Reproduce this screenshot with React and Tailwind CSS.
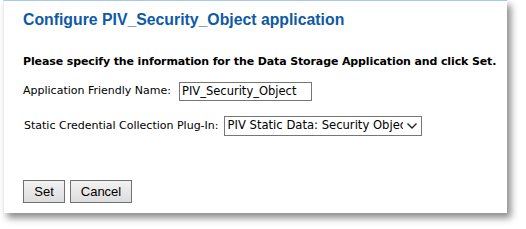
export default function App() {
  return (
    <div className="w-[526px] h-[229px] bg-white overflow-hidden">
      <div className="ml-[3px] w-[504px] h-[213px] bg-white border-t border-t-[#a9c9ea] border-l border-l-[#ececec] shadow-[4px_5px_7px_rgba(0,0,0,0.45)] pl-[19px] pt-[9px]">
        <h1 className="font-['Liberation_Sans',Arial,sans-serif] font-bold text-[15.8px] leading-[20px] text-[#0d5aa7]">
          Configure PIV_Security_Object application
        </h1>
        <p className="mt-[25px] font-['DejaVu_Sans',Verdana,sans-serif] font-bold text-[11px] leading-[14px] text-black tracking-[-0.12px]">
          Please specify the information for the Data Storage Application and click Set.
        </p>
        <div className="mt-[13px] flex items-center font-['DejaVu_Sans',Verdana,sans-serif] text-[11px] text-black">
          <span>Application Friendly Name:</span>
          <div className="ml-[8px] w-[133px] h-[19px] border border-[#767676] flex items-center px-[2px] text-[11.5px]">
            PIV_Security_Object
          </div>
        </div>
        <div className="mt-[15px] flex items-center font-['DejaVu_Sans',Verdana,sans-serif] text-[11px] text-black">
          <span className="ml-[1px]">Static Credential Collection Plug-In:</span>
          <div className="ml-[5px] w-[198px] h-[20px] border border-[#767676] flex items-center pl-[3px] pr-[3px] text-[11.6px]">
            <span className="flex-1 overflow-hidden whitespace-nowrap">PIV Static Data: Security Object</span>
            <svg width="12" height="8" viewBox="0 0 12 8" className="ml-[3px] shrink-0">
              <path d="M1.5 1.5 L6 6 L10.5 1.5" fill="none" stroke="#222" strokeWidth="1.4" />
            </svg>
          </div>
        </div>
        <div className="mt-[44px] flex gap-[5px] font-['Liberation_Sans',Arial,sans-serif] text-[13px] text-black">
          <button className="w-[42px] h-[23px] border border-[#707070] bg-gradient-to-b from-[#f2f2f2] to-[#dddddd]">Set</button>
          <button className="w-[62px] h-[23px] border border-[#707070] bg-gradient-to-b from-[#f2f2f2] to-[#dddddd]">Cancel</button>
        </div>
      </div>
    </div>
  );
}
